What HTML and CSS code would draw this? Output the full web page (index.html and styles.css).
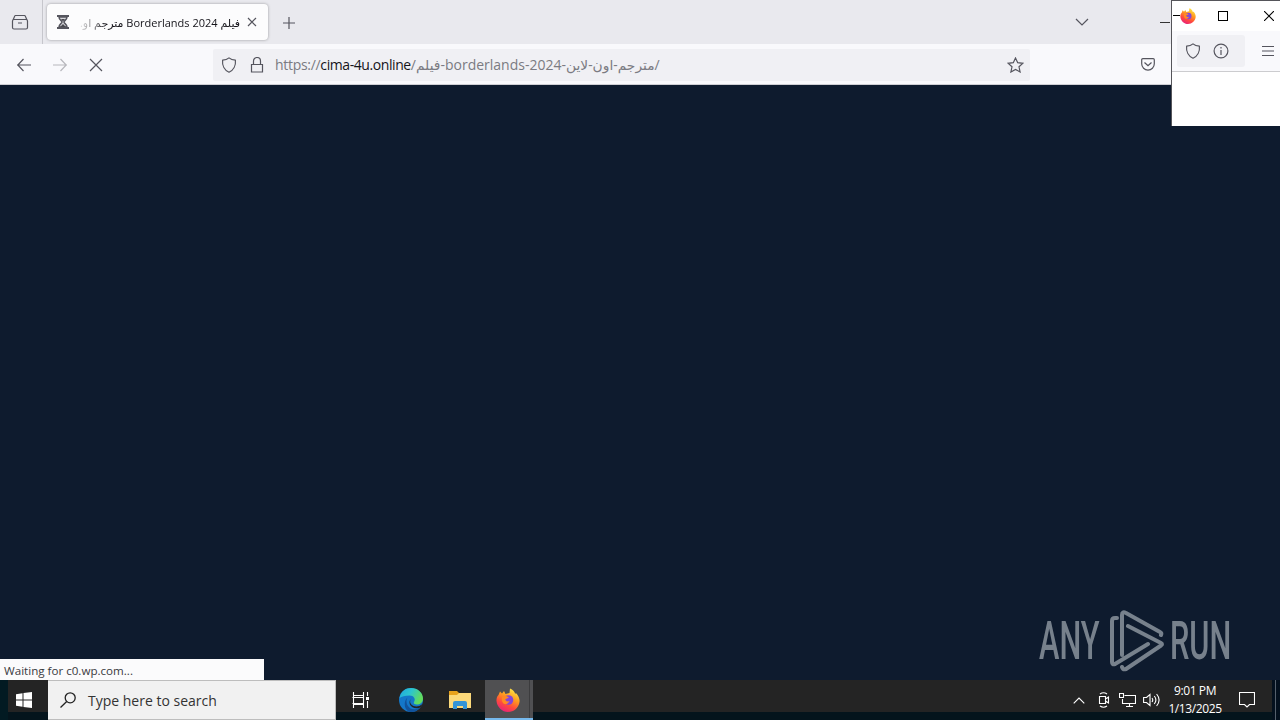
FILE: index.html
```
<!DOCTYPE html>
<html lang="en">
  <head>
    <meta charset="UTF-8" />
    <title>Desktop</title>
    <link rel="stylesheet" href="styles.css">
  </head>
  <body>
    <svg width="0" height="0" class="defs">
      <defs>
        <linearGradient id="fox" x1="0.8" y1="0" x2="0.3" y2="1">
          <stop offset="0" stop-color="#fff04a" />
          <stop offset="0.4" stop-color="#ff9a1f" />
          <stop offset="0.7" stop-color="#ff4a3d" />
          <stop offset="1" stop-color="#e8207c" />
        </linearGradient>
        <linearGradient id="edgeTop" x1="0" y1="0" x2="1" y2="0.4">
          <stop offset="0" stop-color="#1fa6dd" />
          <stop offset="0.5" stop-color="#2cc5cf" />
          <stop offset="1" stop-color="#62dc5c" />
        </linearGradient>
        <symbol id="firefox" viewBox="0 0 24 24">
          <path fill="url(#fox)" d="M2.500 7L4 3.500l2 2L8 3l1.500 3 4-1L14 .5c3 1 4.500 3 5 5l1.500 0C22.500 8 24 11 23.500 14 22.500 20 18 24 12 24S1 19 .5 13C.3 10.500 1 8.500 2.500 7z" />
          <circle cx="12.500" cy="12" r="4.800" fill="#8346d8" />
          <path fill="#ff8a22" d="M6 9c2-2 4-1.500 7 .5-1.500 1-2.500 1.200-3.500 1.500-.5 2 2 3 4 2-1 2.500-3 3.500-5 3-2-.5-3-3-2.500-7z" />
        </symbol>
        <symbol id="shield" viewBox="0 0 16 16">
          <path fill="none" stroke="#55555e" stroke-width="1.200" stroke-linejoin="round" d="M8 .9C6.300 2.300 4 3 1.600 3.200 1 8.500 3.500 13.300 8 15.200c4.500-1.900 7-6.700 6.400-12C12 3 9.700 2.300 8 .9z" />
        </symbol>
      </defs>
    </svg>

    <div class="browser">
      <div class="tab-strip">
        <div class="firefox-view">
          <svg width="18" height="16" viewBox="0 0 18 16" class="line">
            <path d="M4 1.500h10M3 5.500h12a1.500 1.500 0 0 1 1.500 1.500v6.500A1.500 1.500 0 0 1 15 15H3a1.500 1.500 0 0 1-1.500-1.500V7A1.500 1.500 0 0 1 3 5.500zM4 1.500L2 6M14 1.500l2 4.500M7 9h4" />
          </svg>
        </div>
        <div class="tab">
          <svg width="12" height="14" viewBox="0 0 12 14" class="hourglass">
            <path d="M0 1h12M0 13h12" stroke="#55555e" stroke-width="2" />
            <path d="M2 2c0 3 3 3.500 3 5s-3 2-3 5h8c0-3-3-3.500-3-5s3-2 3-5z" fill="#d8d8dc" stroke="#55555e" stroke-width="1.500" />
            <path d="M4 4h4L6 6.500zM3 12l3-3 3 3z" fill="#4a4a50" />
          </svg>
          <div class="tab-title" dir="rtl"><span class="ar">فيلم</span> <span class="latin">Borderlands 2024</span> <span class="ar">مترجم او.</span></div>
          <svg width="10" height="10" viewBox="0 0 10 10" class="line tab-close"><path d="M1 1l8 8M9 1L1 9" /></svg>
        </div>
        <svg width="12" height="12" viewBox="0 0 12 12" class="line new-tab"><path d="M6 0v12M0 6h12" /></svg>
        <svg width="14" height="8" viewBox="0 0 14 8" class="line all-tabs"><path d="M1 1l6 6 6-6" /></svg>
        <div class="minimize"></div>
      </div>

      <div class="nav-bar">
        <svg width="14" height="14" viewBox="0 0 14 14" class="line back"><path d="M0 7h14M6.500 1L.8 7l5.700 6" /></svg>
        <svg width="14" height="14" viewBox="0 0 14 14" class="line forward"><path d="M0 7h14M7.500 1l5.700 6-5.700 6" /></svg>
        <svg width="14" height="14" viewBox="0 0 14 14" class="line stop"><path d="M1 1l12 12M13 1L1 13" /></svg>
        <div class="url-bar">
          <svg width="16" height="16"><use href="#shield" /></svg>
          <svg width="14" height="16" viewBox="0 0 14 16" class="line lock"><path d="M1.500 7.500h11v7.500h-11zM3.500 7.500V4a3.500 3.500 0 0 1 7 0v3.500" /></svg>
          <div class="url"><span class="scheme">https://</span><span class="host">cima-4u.online</span><span class="path">/<span class="ar">فيلم</span><span class="slug">-borderlands-2024-</span><span class="ar">مترجم-اون-لاين</span>/</span></div>
          <svg width="17" height="16" viewBox="0 0 17 16" class="line star"><path d="M8.500 1l2.200 4.700 5.200.6-3.900 3.500 1.100 5.200-4.600-2.600L3.900 15 5 9.800 1.100 6.300l5.200-.6z" /></svg>
        </div>
        <svg width="14" height="13" viewBox="0 0 14 13" class="line pocket"><path d="M1.800.7h10.400a1.100 1.100 0 0 1 1.100 1.100v4a6.300 6.300 0 0 1-12.600 0v-4A1.100 1.100 0 0 1 1.800.7zM3.500 4.500L7 7.800l3.500-3.300" /></svg>
      </div>

      <div class="page"></div>

      <div class="status">Waiting for c0.wp.com...</div>
    </div>

    <div class="popup">
      <div class="popup-title">
        <div class="popup-min"></div>
        <svg width="16" height="16" class="popup-logo"><use href="#firefox" /></svg>
        <div class="popup-max"></div>
        <svg width="10" height="10" viewBox="0 0 10 10" class="popup-close"><path d="M0 0l10 10M10 0L0 10" /></svg>
      </div>
      <div class="popup-nav">
        <div class="popup-url">
          <svg width="16" height="16"><use href="#shield" /></svg>
          <svg width="16" height="16" viewBox="0 0 16 16" class="line"><circle cx="8" cy="8" r="6.900" /><path d="M8 7v5M8 4v1.500" /></svg>
        </div>
        <svg width="12" height="10" viewBox="0 0 12 10" class="line menu"><path d="M0 .5h12M0 5h12M0 9.500h12" /></svg>
      </div>
    </div>

    <div class="watermark">
      <span class="word any">ANY</span>
      <svg width="54" height="62" viewBox="0 0 54 62">
        <path d="M7 8H5Q2 8 2 11v41q0 3 3 2l33-20M12 45V5q0-4 4-2l34 19q2 1 1 3M18 16l33 17q2 1 0 2.500L16 59q-3 1-4-2" />
      </svg>
      <span class="word run">RUN</span>
    </div>

    <div class="taskbar">
      <div class="start">
        <svg width="16" height="16" viewBox="0 0 16 16" fill="#fff"><path d="M0 2.200L6.500 1.300v6.200H0zM7.500 1.100L16 0v7.500H7.500zM0 8.500h6.500v6.200L0 13.800zM7.500 8.500H16V16l-8.500-1.100z" /></svg>
      </div>
      <div class="search">
        <svg width="16" height="16" viewBox="0 0 16 16"><circle cx="10.200" cy="5.800" r="5" /><path d="M6.700 9.500L.5 15.500" /></svg>
        <span>Type here to search</span>
      </div>
      <div class="task">
        <svg width="17" height="16" viewBox="0 0 17 16" class="white"><path d="M1.500 0v3.500h10V0M1.500 3.500v9M11.500 3.500v9M.5 5.500h11M.5 11.500h11M1.500 16v-3.500h10V16M15.500 0v4M15.500 9v7" /><path d="M14 5h3v3h-3z" fill="#fff" stroke="none" /></svg>
      </div>
      <div class="task edge">
        <svg width="24" height="24" viewBox="0 0 24 24">
          <circle cx="12" cy="12" r="12" fill="#1477c9" />
          <path d="M.5 10C2 3 6.500 0 12 0c7 0 12 5 12 10.500 0 4-3 6-6 6-2.500 0-4-1-3-2.500 2-3 0-6.500-4.500-6.500C6 7.500 2.500 8.500.5 10z" fill="url(#edgeTop)" />
          <path d="M9 9c-2 2-2 6 0 9s6 5 12 1.500c-3 4-7 5-11 4.200C5 22 4 13 9 9z" fill="#11539c" />
          <path d="M12.500 10.500c-2.500 2-1.500 6 2 7.500 3 1 6 .5 9-2l-1.500 3.200c-3 1.500-6 1.500-8.500 0-3.500-2-4-6.500-1-8.700z" fill="#242424" />
        </svg>
      </div>
      <div class="task folder">
        <svg width="22" height="18" viewBox="0 0 22 18">
          <path d="M0 0h8l2 2h11v5H0z" fill="#e8a21c" />
          <path d="M0 4h8l2-2h12v15H0z" fill="#fcd97a" />
          <path d="M4 18v-6q0-2 2-2h10q2 0 2 2v6h-4v-3H8v3z" fill="#3494d6" />
        </svg>
      </div>
      <div class="task active">
        <svg width="24" height="24"><use href="#firefox" /></svg>
      </div>
      <div class="tray">
        <svg width="12" height="7" viewBox="0 0 12 7" class="white"><path d="M.7 6.300L6 1l5.300 5.300" /></svg>
        <svg width="12" height="16" viewBox="0 0 12 16" class="white camera"><path d="M1.500 4.500h6v7h-6zM7.500 7l3-2v6l-3-2M2 2q3.500-2.500 7 0M2 14q3.500 2.500 7 0" /></svg>
        <svg width="17" height="14" viewBox="0 0 17 14" class="white network"><path d="M5.500 2.500h11v8H3.500V6M10.500 10.500v3M7 13.500h7M.5.500h4v4h-4z" /></svg>
        <svg width="17" height="14" viewBox="0 0 17 14" class="white volume"><path d="M.6 4.500h2.900L7 1.500v11l-3.500-3H.6zM9 5q1.500 2 0 4M11.300 3q3.200 4 0 8M13.600 1q5 6 0 12" /></svg>
        <div class="clock">
          <div class="time">9:01 PM</div>
          <div class="date">1/13/2025</div>
        </div>
        <svg width="16" height="16" viewBox="0 0 16 16" class="white notes"><path d="M.5.500h15v12h-5L8 15l-2.500-2.500h-5z" /></svg>
        <div class="show-desktop"></div>
      </div>
    </div>
  </body>
</html>
```
FILE: styles.css
```
* {
  box-sizing: border-box;
}
body {
  margin: 0;
  width: 1280px;
  height: 720px;
  overflow: hidden;
  display: flex;
  flex-direction: column;
  position: relative;
  background-color: #0e1b2e;
  font-family: "Open Sans", "Noto Sans", "DejaVu Sans", sans-serif;
}
svg {
  display: block;
  flex: none;
}
.defs {
  position: absolute;
}
.line {
  fill: none;
  stroke: #55555e;
  stroke-width: 1.2;
}
.white {
  fill: none;
  stroke: #fff;
  stroke-width: 1.1;
}

/* browser window */
.browser {
  height: 680px;
  display: flex;
  flex-direction: column;
  position: relative;
}
.tab-strip {
  height: 44px;
  flex: none;
  display: flex;
  align-items: center;
  background-color: #e9e9ee;
}
.firefox-view {
  width: 43px;
  height: 44px;
  padding: 14px 0 0 11px;
  border-right: 1px solid #c6c6cc;
}
.tab {
  width: 221px;
  height: 36px;
  margin-left: 4px;
  padding: 0 11px 0 10px;
  display: flex;
  align-items: center;
  background-color: #fcfcfd;
  border-radius: 4px;
  box-shadow: 0 0 3px rgba(0, 0, 0, 0.35);
}
.tab-title {
  width: 163px;
  height: 20px;
  margin-left: 8px;
  line-height: 22px;
  font-size: 11px;
  color: #15141a;
  white-space: nowrap;
  overflow: hidden;
  mask-image: linear-gradient(to right, transparent, #000 30px);
}
.tab-close {
  margin-left: 7px;
}
.new-tab {
  margin-left: 15px;
  margin-top: 1px;
}
.all-tabs {
  margin-left: auto;
  margin-right: 71px;
}
.minimize {
  width: 10px;
  height: 1px;
  margin-right: 110px;
  background-color: #333;
}
.nav-bar {
  height: 41px;
  flex: none;
  display: flex;
  align-items: center;
  padding-top: 1px;
  background-color: #f9f9fc;
  border-bottom: 1px solid #cfcfd4;
}
.back {
  margin-left: 17px;
}
.forward {
  margin-left: 22px;
  opacity: 0.4;
}
.stop {
  margin-left: 22px;
}
.url-bar {
  width: 817px;
  height: 32px;
  margin-left: 110px;
  padding: 0 6px 0 8px;
  display: flex;
  align-items: center;
  background-color: #f0f0f4;
  border-radius: 2px;
}
.lock {
  margin-left: 13px;
}
.url {
  margin-left: 11px;
  display: flex;
  align-items: center;
  height: 24px;
  font-size: 14px;
  white-space: nowrap;
  color: #7b7b82;
}
.scheme {
  letter-spacing: -0.3px;
}
.host {
  color: #15141a;
  letter-spacing: -0.42px;
}
.path .ar {
  font-size: 13.8px;
}
.star {
  margin-left: auto;
}
.pocket {
  margin-left: 111px;
}
.page {
  flex: 1;
  background-color: #0e1b2e;
}
.status {
  position: absolute;
  left: 0;
  bottom: 0;
  width: 264px;
  height: 21px;
  padding-left: 4px;
  line-height: 23px;
  font-size: 11.6px;
  color: #3a3a40;
  background-color: #fbfbfc;
}

/* small window at the right edge */
.popup {
  position: absolute;
  left: 1171px;
  top: 0;
  width: 109px;
  height: 126px;
  background-color: #fff;
  border-left: 1px solid #55555a;
  border-top: 1px solid #55555a;
}
.popup-title {
  height: 30px;
  display: flex;
  align-items: center;
  padding-bottom: 1px;
}
.popup-min {
  width: 7px;
  height: 1px;
  margin-left: 1px;
  background-color: #000;
}
.popup-max {
  width: 10px;
  height: 10px;
  margin-left: 22px;
  border: 1px solid #000;
}
.popup-close {
  margin-left: 36px;
  stroke: #000;
  stroke-width: 1.1;
}
.popup-nav {
  height: 41px;
  padding-left: 5px;
  display: flex;
  align-items: center;
  background-color: #f9f9fc;
  border-bottom: 1px solid #cccccf;
}
.popup-url {
  width: 68px;
  height: 32px;
  padding-left: 8px;
  display: flex;
  align-items: center;
  gap: 12px;
  background-color: #f0f0f4;
  border-radius: 3px;
}
.menu {
  margin-left: 17px;
}

/* watermark */
.watermark {
  position: absolute;
  left: 1039px;
  top: 610px;
  width: 194px;
  height: 62px;
  display: flex;
  align-items: center;
  color: #77818c;
}
.watermark svg {
  margin-left: 8px;
  fill: none;
  stroke: #77818c;
  stroke-width: 4;
  stroke-linecap: round;
  stroke-linejoin: round;
}
.word {
  width: 63px;
  font-family: Roboto, "Liberation Sans", sans-serif;
  font-size: 53px;
  font-weight: 500;
  line-height: 64px;
  transform: scaleX(0.58);
  transform-origin: left center;
}
.run {
  margin-left: 6px;
}

/* taskbar */
.taskbar {
  height: 40px;
  display: flex;
  background: linear-gradient(#242424 32px, #04141c 32px);
}
.start {
  width: 48px;
  height: 40px;
  padding: 12px 0 0 8px;
  border-left: 8px solid #021a22;
}
.search {
  width: 288px;
  height: 40px;
  padding-left: 12px;
  display: flex;
  align-items: center;
  background-color: #f1f1f1;
  border: 1px solid #bdbdbd;
  border-left: none;
  font-size: 14px;
  color: #333;
}
.search svg {
  fill: none;
  stroke: #222;
  stroke-width: 1.3;
}
.search span {
  margin-left: 12px;
}
.task {
  width: 49px;
  height: 40px;
  display: flex;
  align-items: center;
  justify-content: center;
}
.edge {
  margin-left: 1px;
}
.active {
  width: 48px;
  margin-left: 1px;
  padding: 2px 3px 0 0;
  background: linear-gradient(to right, #505052 44px, #3c3c3e 44px, #3c3c3e 45px, #505052 45px);
  border-bottom: 2px solid #76b9ed;
}
.tray {
  margin-left: auto;
  display: flex;
  align-items: center;
}
.camera {
  margin-left: 13px;
}
.network {
  margin-left: 9px;
}
.volume {
  margin-left: 7px;
}
.clock {
  width: 56px;
  margin-left: 7px;
  text-align: center;
  font-size: 12px;
  line-height: 18px;
  letter-spacing: -0.4px;
  color: #fff;
  white-space: nowrap;
}
.notes {
  margin-left: 16px;
}
.show-desktop {
  width: 8px;
  height: 40px;
  margin-left: 17px;
  background: linear-gradient(to right, #04101e 3px, #56606c 3px, #56606c 4px, #04101e 4px);
}
```
